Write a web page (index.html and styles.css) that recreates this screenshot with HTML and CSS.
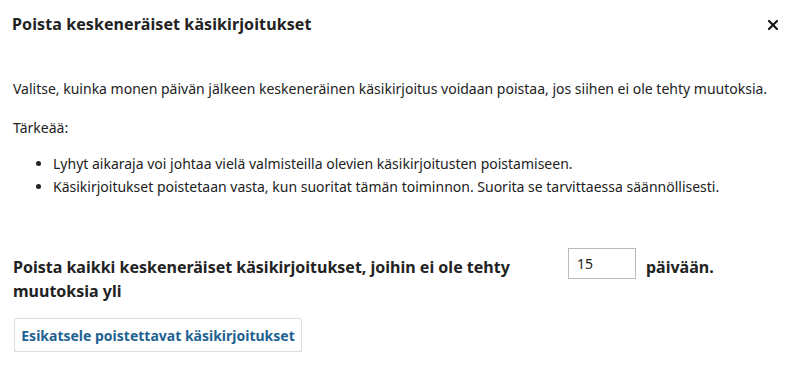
FILE: index.html
```html
<!DOCTYPE html>
<html lang="fi">
<head>
    <meta charset="UTF-8">
    <meta name="viewport" content="width=device-width, initial-scale=1.0">
    <title>Poista keskeneräiset käsikirjoitukset</title>
    <link rel="stylesheet" href="styles.css">
</head>
<body>
    <div class="modal">
        <div class="modal-header">
            <h2 class="modal-title">Poista keskeneräiset käsikirjoitukset</h2>
            <button class="close" aria-label="Sulje">
                <svg width="10" height="10" viewBox="0 0 10 10">
                    <path d="M1 1 L9 9 M9 1 L1 9" stroke="#111" stroke-width="2.1" stroke-linecap="square" fill="none"/>
                </svg>
            </button>
        </div>

        <div class="modal-body">
            <p class="intro">Valitse, kuinka monen päivän jälkeen keskeneräinen käsikirjoitus voidaan poistaa, jos siihen ei ole tehty muutoksia.</p>
            <p class="note">Tärkeää:</p>
            <ul class="note-list">
                <li>Lyhyt aikaraja voi johtaa vielä valmisteilla olevien käsikirjoitusten poistamiseen.</li>
                <li>Käsikirjoitukset poistetaan vasta, kun suoritat tämän toiminnon. Suorita se tarvittaessa säännöllisesti.</li>
            </ul>

            <div class="days-row">
                <label for="days" class="days-label">Poista kaikki keskeneräiset käsikirjoitukset, joihin ei ole tehty muutoksia yli</label>
                <input type="text" id="days" class="days-input" value="15">
                <span class="days-unit">päivään.</span>
            </div>

            <button class="button">Esikatsele poistettavat käsikirjoitukset</button>
        </div>
    </div>
</body>
</html>
```

FILE: styles.css
```css
body {
    margin: 0;
    font-family: "Noto Sans", "Open Sans", sans-serif;
    font-size: 14px;
    color: #222;
    background: #fff;
}
.modal-header {
    display: flex;
    justify-content: space-between;
    align-items: center;
    padding: 12px 13px 12px 12px;
}
.modal-title {
    margin: 0;
    font-size: 16px;
    font-weight: 700;
    line-height: 24px;
    letter-spacing: 0.1px;
}
.close {
    border: none;
    background: none;
    padding: 0;
    margin: 1px 5px 0 0;
    width: 10px;
    height: 10px;
    display: flex;
    cursor: pointer;
}
.modal-body {
    padding: 29px 13px 0 13px;
}
.intro, .note {
    margin: 0;
    line-height: 23px;
}
.note {
    margin-top: 16px;
}
.note-list {
    margin: 13px 0 0 0;
    padding-left: 40px;
    line-height: 23px;
}
.days-row {
    display: flex;
    align-items: flex-start;
    margin-top: 50px;
}
.days-label {
    width: 540px;
    padding-top: 7px;
    font-size: 16px;
    font-weight: 700;
    line-height: 24px;
}
.days-input {
    width: 68px;
    height: 31px;
    box-sizing: border-box;
    margin-left: 15px;
    padding: 0 8px;
    border: 1px solid #bbb;
    font-family: inherit;
    font-size: 14px;
    color: #222;
}
.days-unit {
    margin-left: 10px;
    padding-top: 7px;
    font-size: 16px;
    font-weight: 700;
    line-height: 24px;
}
.button {
    display: block;
    margin: 15px 0 0 1px;
    width: 288px;
    height: 34px;
    padding: 0;
    border: 1px solid #ddd;
    border-radius: 3px;
    box-shadow: 0 1px 0 #ddd;
    background: #fff;
    color: #1e6292;
    font-family: inherit;
    font-size: 14px;
    font-weight: 700;
    cursor: pointer;
}
```
